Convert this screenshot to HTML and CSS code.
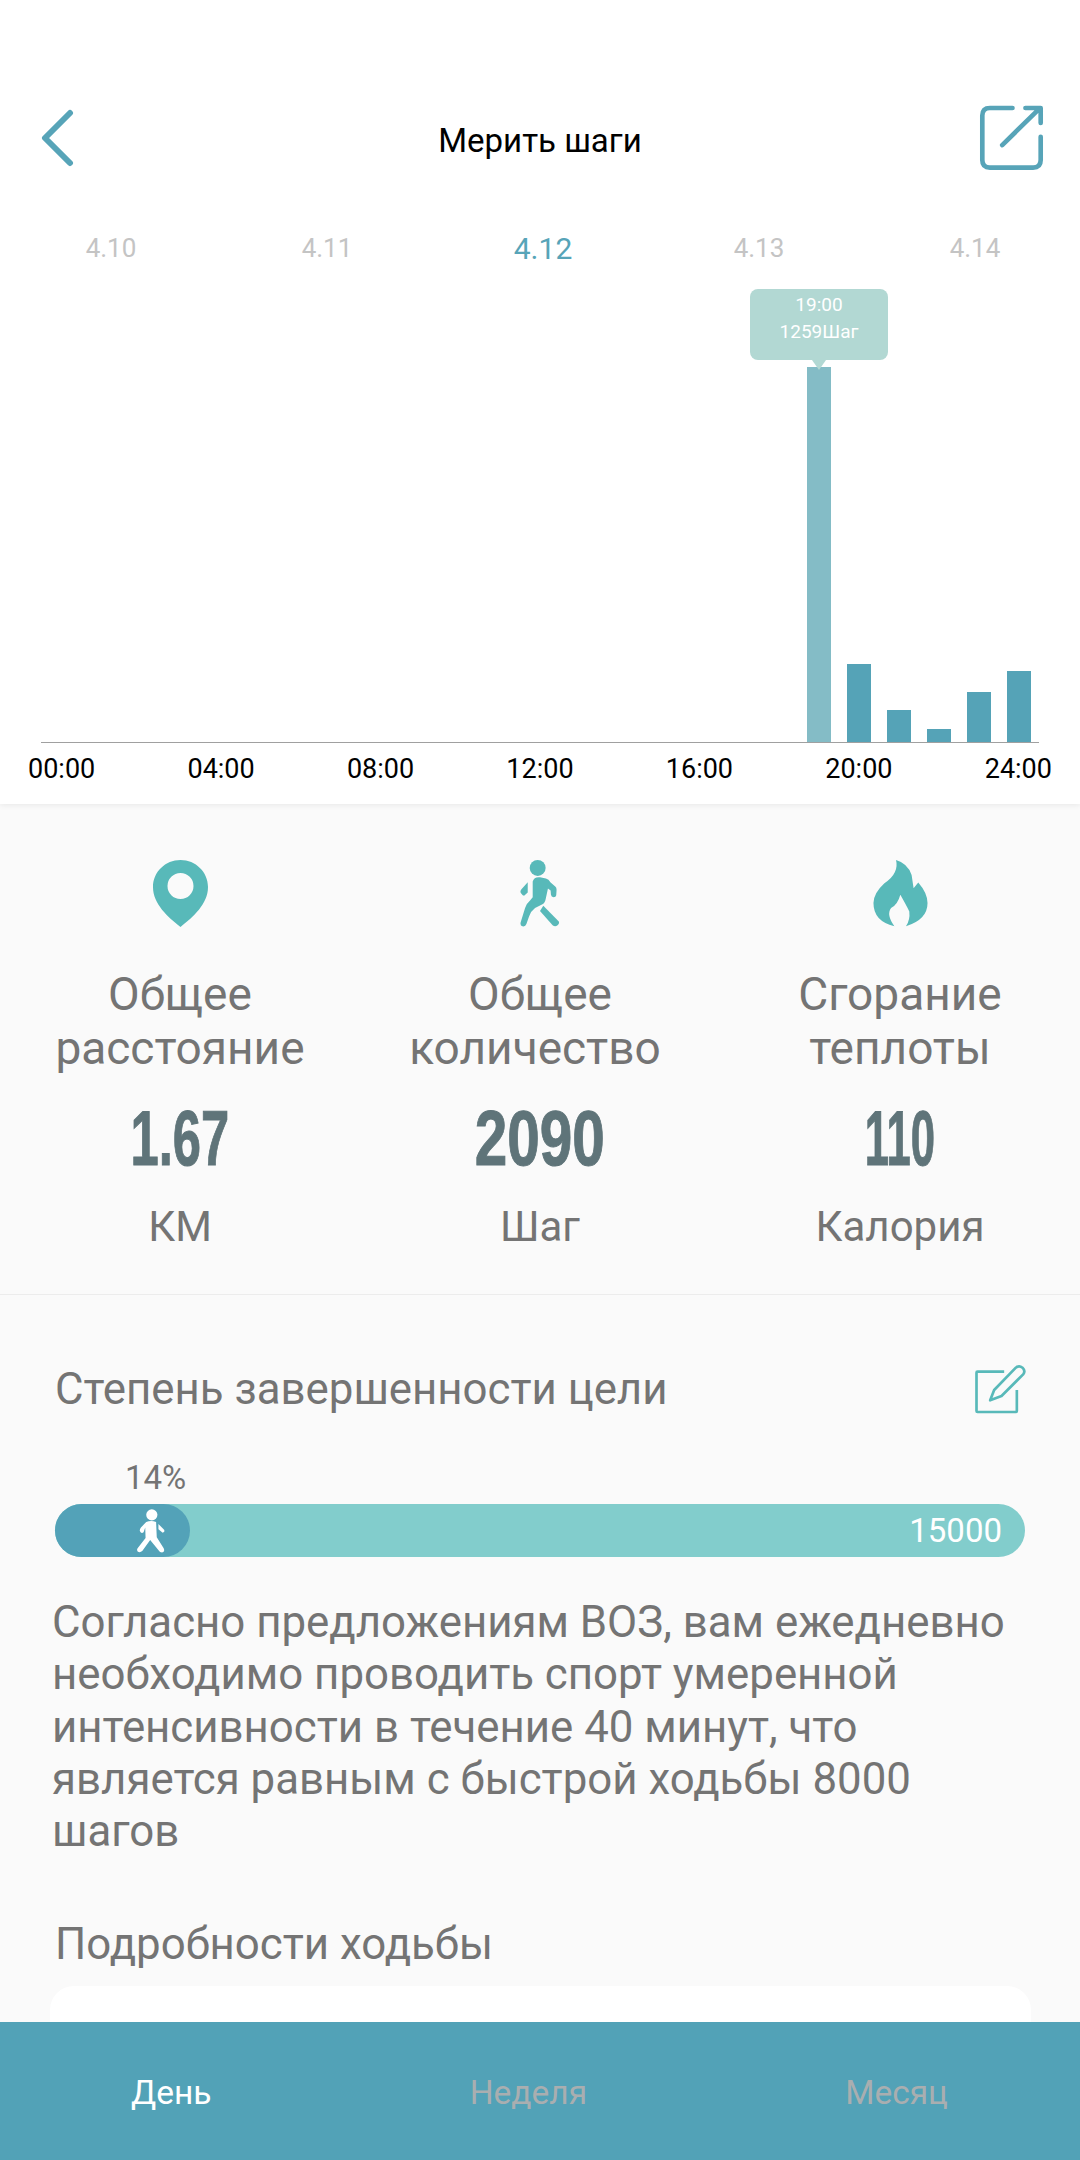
FILE: index.html
```html
<!DOCTYPE html>
<html lang="ru">
<head>
    <meta charset="UTF-8">
    <title>Мерить шаги</title>
    <link rel="stylesheet" href="styles.css">
</head>
<body>
    <div class="page">
        <section class="top">
            <header class="header">
                <svg class="back" viewBox="0 0 34 60"><polyline points="30,5 5,30 30,55"/></svg>
                <h1 class="title">Мерить шаги</h1>
                <svg class="share" viewBox="55 43 200 205">
                    <path d="M158 55H90Q67 55 67 78V212Q67 235 90 235H220Q243 235 243 212V142"/>
                    <path d="M127 167L240 56M197 55H243V100"/>
                </svg>
            </header>
            <div class="dates">
                <span class="date">4.10</span>
                <span class="date">4.11</span>
                <span class="date date-active">4.12</span>
                <span class="date">4.13</span>
                <span class="date">4.14</span>
            </div>
            <div class="plot">
                <div class="bar bar-active" style="height:375px">
                    <div class="tip">
                        <div>19:00</div>
                        <div>1259Шаг</div>
                    </div>
                </div>
                <div class="bar" style="height:78px"></div>
                <div class="bar" style="height:32px"></div>
                <div class="bar" style="height:13px"></div>
                <div class="bar" style="height:50px"></div>
                <div class="bar" style="height:71px"></div>
            </div>
            <div class="axis">
                <span>00:00</span>
                <span>04:00</span>
                <span>08:00</span>
                <span>12:00</span>
                <span>16:00</span>
                <span>20:00</span>
                <span>24:00</span>
            </div>
        </section>

        <section class="stats">
            <div class="stat">
                <svg class="stat-icon" width="55" height="67" viewBox="0 0 55 67">
                    <path fill-rule="evenodd" d="M27.5 0C12.3 0 0 12 0 27C0 44 15 57 27.5 67C40 57 55 44 55 27C55 12 42.7 0 27.5 0ZM27.5 13A13 13 0 1 1 27.5 39A13 13 0 1 1 27.5 13Z"/>
                </svg>
                <div class="stat-label">Общее<br>расстояние</div>
                <div class="stat-value"><span class="value-mid">1.67</span></div>
                <div class="stat-unit">КМ</div>
            </div>
            <div class="stat">
                <svg class="stat-icon" width="40" height="67" viewBox="120 60 120 202">
                    <circle cx="173" cy="84" r="24"/>
                    <path d="M158 125Q162 110 180 112L198 116Q206 118 212 128L226 140Q230 143 230 150L229 166Q228 172 221 172Q214 172 213 165L212 152L204 146L197 178Q195 190 186 194L165 205Q152 215 147 230L139 253Q136 262 127 260Q119 257 122 247L135 205Q138 192 150 182L158 172Z"/>
                    <path d="M143 127V158L132 168Q128 168 124 162Q118 155 124 148Z"/>
                    <path d="M190 198L236 245Q240 250 233 257Q226 263 218 257L180 214Z"/>
                </svg>
                <div class="stat-label">Общее<br><span class="label-pad">количество</span></div>
                <div class="stat-value"><span class="value-wide">2090</span></div>
                <div class="stat-unit">Шаг</div>
            </div>
            <div class="stat">
                <svg class="stat-icon" width="55" height="67" viewBox="97 60 163 202">
                    <path d="M165 60Q200 70 212 105L218 145L232 128Q260 160 260 190Q260 240 195 260Q208 240 205 215Q195 195 178 165Q170 195 150 205Q135 225 160 260Q97 245 97 190Q97 160 130 130Q175 100 165 60Z"/>
                </svg>
                <div class="stat-label">Сгорание<br>теплоты</div>
                <div class="stat-value"><span class="value-thin">110</span></div>
                <div class="stat-unit">Калория</div>
            </div>
        </section>

        <section class="goal">
            <div class="goal-head">
                <span class="goal-title">Степень завершенности цели</span>
                <svg class="edit" viewBox="40 44 155 150">
                    <path d="M130 67H50Q47 67 47 70V185Q47 188 50 188H165Q168 188 168 185V122"/>
                    <path d="M88 153L100 122L165 55Q175 47 185 55Q195 65 187 75L122 140Z"/>
                </svg>
            </div>
            <div class="percent">14%</div>
            <div class="progress">
                <div class="progress-fill" style="width:135px">
                    <svg class="walker" viewBox="112 85 85 132">
                        <circle cx="157" cy="102" r="17"/>
                        <path d="M140 124Q155 118 170 124L172 170L193 203Q198 214 188 216Q181 216 178 210L152 178L128 212Q120 218 114 213Q110 207 115 202L138 172L137 140L132 155Q125 160 121 152Q119 146 124 140Z"/>
                        <path d="M177 130L195 148Q197 154 190 156L177 146Z"/>
                    </svg>
                </div>
                <span class="progress-goal">15000</span>
            </div>
            <p class="note">Согласно предложениям ВОЗ, вам ежедневно необходимо проводить спорт умеренной интенсивности в течение 40 минут, что является равным с быстрой ходьбы 8000 шагов</p>
            <div class="detail-title">Подробности ходьбы</div>
            <div class="detail-card"></div>
        </section>

        <nav class="tabs">
            <span class="tab tab-active">День</span>
            <span class="tab">Неделя</span>
            <span class="tab">Месяц</span>
        </nav>
    </div>
</body>
</html>
```

FILE: styles.css
```css
* {
    box-sizing: border-box;
}

body {
    margin: 0;
    font-family: Roboto, "Liberation Sans", sans-serif;
    color: #747474;
    background: #fafafa;
}

.page {
    display: flex;
    flex-direction: column;
    height: 2160px;
    overflow: hidden;
}

.top {
    flex: none;
    height: 804px;
    background: #fff;
    box-shadow: 0 1px 6px rgba(0, 0, 0, 0.08);
}

.header {
    display: flex;
    align-items: center;
    justify-content: space-between;
    height: 80px;
    margin-top: 100px;
    padding: 0 35px 0 40px;
}

.back {
    width: 34px;
    height: 60px;
    margin-top: -4px;
    fill: none;
    stroke: #57a4b8;
    stroke-width: 6;
    stroke-linecap: round;
    stroke-linejoin: round;
}

.title {
    margin: 0 0 0 28px;
    font-size: 33px;
    font-weight: 400;
    color: #000;
}

.share {
    width: 67px;
    height: 68px;
    margin-top: -4px;
    fill: none;
    stroke: #57a4b8;
    stroke-width: 14;
    stroke-linecap: round;
    stroke-linejoin: round;
}

.dates {
    display: grid;
    grid-template-columns: repeat(5, 216px);
    align-items: center;
    height: 40px;
    margin: 48px 0 0 3px;
    text-align: center;
}

.date {
    font-size: 26px;
    color: #c4c4c4;
}

.date-active {
    font-size: 30px;
    color: #57a4b8;
}

.plot {
    display: flex;
    align-items: flex-end;
    justify-content: flex-end;
    gap: 16px;
    height: 475px;
    margin: 0 41px;
    padding-right: 8px;
    border-bottom: 1px solid #a0a0a0;
}

.bar {
    position: relative;
    width: 24px;
    background: #55a3b7;
}

.bar-active {
    background: #84bcc6;
}

.tip {
    position: absolute;
    left: -57px;
    top: -78px;
    width: 138px;
    height: 71px;
    padding-top: 2px;
    border-radius: 8px;
    background: #b2d8d3;
    color: #fff;
    font-size: 19px;
    line-height: 27px;
    text-align: center;
}

.tip::after {
    content: "";
    position: absolute;
    left: 62px;
    top: 71px;
    border-left: 7px solid transparent;
    border-right: 7px solid transparent;
    border-top: 10px solid #b2d8d3;
}

.axis {
    display: flex;
    justify-content: space-between;
    margin-top: 10px;
    padding: 0 28px;
    font-size: 27px;
    line-height: 32px;
    color: #000;
}

.stats {
    flex: none;
    display: grid;
    grid-template-columns: repeat(3, 1fr);
    height: 491px;
    padding-top: 56px;
    border-bottom: 1px solid #ececec;
}

.stat {
    display: flex;
    flex-direction: column;
    align-items: center;
    text-align: center;
}

.stat-icon {
    flex: none;
    fill: #58b9b9;
}

.stat-label {
    margin-top: 40px;
    font-size: 46px;
    line-height: 54px;
}

.label-pad {
    margin-right: 10px;
}

.stat-value {
    margin-top: 18px;
    font-family: "Liberation Sans", sans-serif;
    font-size: 78px;
    font-weight: 700;
    line-height: 90px;
    color: #5f7479;
}

.stat-value span {
    display: inline-block;
    -webkit-text-stroke: 1px #5f7479;
}

.value-wide {
    transform: scaleX(0.75);
}

.value-mid {
    transform: scaleX(0.65);
}

.value-thin {
    transform: scaleX(0.56);
}

.stat-unit {
    margin-top: 22px;
    font-size: 42px;
    line-height: 44px;
}

.goal {
    flex: 1;
    min-height: 0;
    overflow: hidden;
    padding: 0 49px 0 55px;
}

.goal-head {
    display: flex;
    align-items: center;
    justify-content: space-between;
    height: 50px;
    margin-top: 69px;
    font-size: 43.8px;
}

.edit {
    width: 52px;
    height: 50px;
    margin-right: 5px;
    fill: none;
    stroke: #58b9b9;
    stroke-width: 8;
    stroke-linejoin: round;
}

.percent {
    margin: 44px 0 6px 70px;
    font-size: 33px;
    line-height: 40px;
}

.progress {
    display: flex;
    align-items: center;
    justify-content: space-between;
    width: 970px;
    height: 53px;
    padding-right: 23px;
    border-radius: 27px;
    background: #82cdcc;
}

.progress-fill {
    display: flex;
    align-items: center;
    justify-content: flex-end;
    height: 53px;
    padding-right: 25px;
    border-radius: 27px;
    background: #53a2b8;
}

.walker {
    width: 28px;
    height: 44px;
    fill: #fff;
}

.progress-goal {
    font-size: 33px;
    color: #fff;
}

.note {
    margin: 39px 0 0 -3px;
    font-size: 43.8px;
    line-height: 52.3px;
}

.detail-title {
    margin: 62px 0 0;
    font-size: 43.8px;
    line-height: 50px;
}

.detail-card {
    height: 120px;
    margin: 17px 0 0 -5px;
    border-radius: 24px;
    background: #fff;
}

.tabs {
    flex: none;
    display: flex;
    align-items: center;
    justify-content: space-between;
    height: 138px;
    padding: 2px 132px 0 131px;
    background: #52a2b7;
}

.tab {
    font-size: 33.5px;
    color: #a9aeb0;
}

.tab-active {
    color: #fff;
}
```
